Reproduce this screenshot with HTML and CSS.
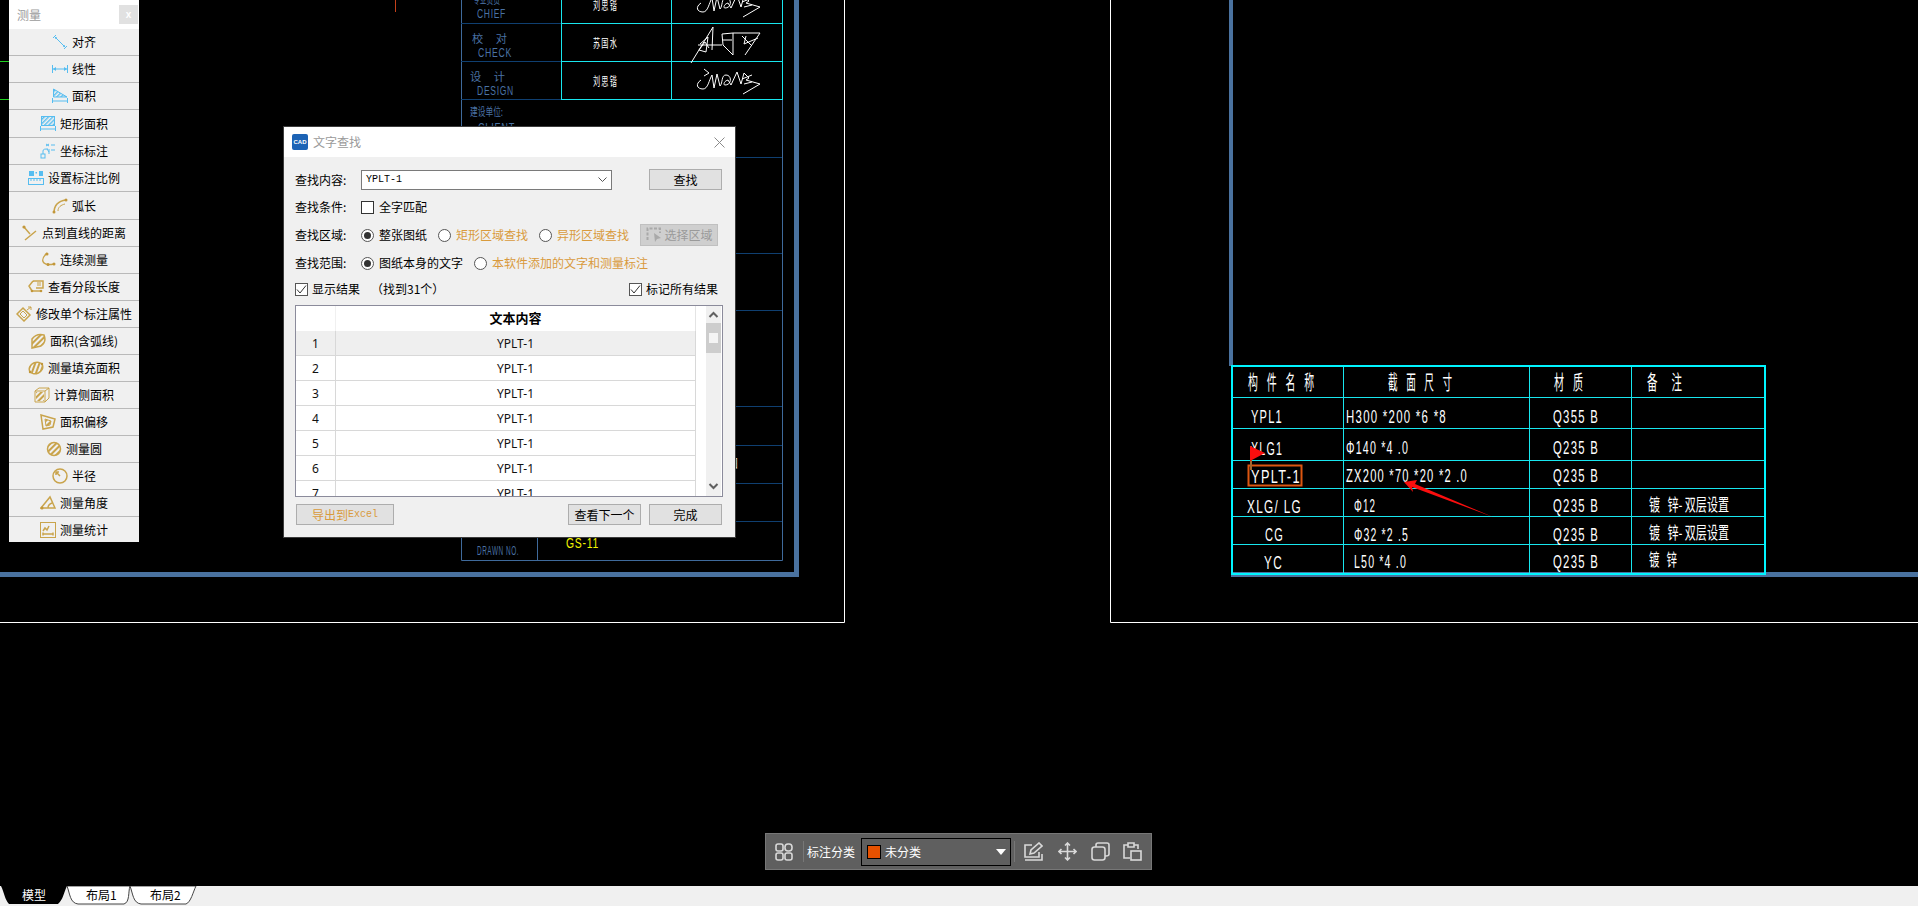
FILE: index.html
```html
<!DOCTYPE html>
<html lang="zh">
<head>
<meta charset="utf-8">
<title>文字查找</title>
<link rel="stylesheet" href="styles.css">
</head>
<body>
<div class="app">
  <main class="canvas">
    <svg class="drawing" width="1918" height="886" viewBox="0 0 1918 886">
      <defs>
        <pattern id="hb" width="3" height="3" patternUnits="userSpaceOnUse" patternTransform="rotate(-45)"><rect width="3" height="1.4" fill="#56bdf0"/></pattern>
        <pattern id="hg" width="4" height="4" patternUnits="userSpaceOnUse" patternTransform="rotate(-45)"><rect width="4" height="2" fill="#c9a44c"/></pattern>
      </defs>
      <!-- stray model lines -->
      <line class="l-green" x1="0" y1="61.5" x2="10" y2="61.5"/>
      <line class="l-green" x1="0" y1="99.5" x2="10" y2="99.5"/>
      <line class="l-red" x1="395.5" y1="0" x2="395.5" y2="12"/>

      <!-- left sheet -->
      <polyline class="l-white" points="844.5,0 844.5,622.5 0,622.5"/>
      <polyline class="l-frame" points="796.5,0 796.5,574.5 0,574.5"/>
      <polyline class="l-block" points="461.5,0 461.5,560.5 782.5,560.5 782.5,0"/>
      <line class="l-block" x1="537.5" y1="537" x2="537.5" y2="560"/>
      <line class="l-dim" x1="461" y1="23.5" x2="561" y2="23.5"/>
      <line class="l-dim" x1="461" y1="61.5" x2="561" y2="61.5"/>
      <line class="l-dim" x1="461" y1="99.5" x2="561" y2="99.5"/>
      <line class="l-dim" x1="461" y1="157.5" x2="782" y2="157.5"/>
      <line class="l-dim" x1="461" y1="253.5" x2="782" y2="253.5"/>
      <line class="l-dim" x1="461" y1="310.5" x2="782" y2="310.5"/>
      <line class="l-dim" x1="461" y1="406.5" x2="782" y2="406.5"/>
      <line class="l-dim" x1="461" y1="445.5" x2="782" y2="445.5"/>
      <line class="l-dim" x1="461" y1="483.5" x2="782" y2="483.5"/>
      <line class="l-dim" x1="461" y1="521.5" x2="782" y2="521.5"/>
      <g class="l-cyan">
        <line x1="561.5" y1="0" x2="561.5" y2="99"/>
        <line x1="671.5" y1="0" x2="671.5" y2="99"/>
        <line x1="782.5" y1="0" x2="782.5" y2="99"/>
        <line x1="561" y1="23.5" x2="783" y2="23.5"/>
        <line x1="561" y1="61.5" x2="783" y2="61.5"/>
        <line x1="561" y1="99.5" x2="783" y2="99.5"/>
      </g>
      <text class="t-blue" x="473" y="4" textLength="27" lengthAdjust="spacingAndGlyphs">专业负责</text>
      <text class="t-blue-en" x="477" y="18" textLength="29" lengthAdjust="spacingAndGlyphs">CHIEF</text>
      <text class="t-blue" x="472" y="43" textLength="35" lengthAdjust="spacingAndGlyphs">校     对</text>
      <text class="t-blue-en" x="478" y="57" textLength="34" lengthAdjust="spacingAndGlyphs">CHECK</text>
      <text class="t-blue" x="470" y="81" textLength="35" lengthAdjust="spacingAndGlyphs">设     计</text>
      <text class="t-blue-en" x="477" y="95" textLength="37" lengthAdjust="spacingAndGlyphs">DESIGN</text>
      <text class="t-blue" x="470" y="116" textLength="33" lengthAdjust="spacingAndGlyphs">建设单位:</text>
      <text class="t-blue-en" x="478" y="132" textLength="37" lengthAdjust="spacingAndGlyphs">CLIENT</text>
      <text class="t-blue-en" x="477" y="555" textLength="42" lengthAdjust="spacingAndGlyphs">DRAWN NO.</text>
      <text class="t-yellow" x="566" y="548" textLength="33" lengthAdjust="spacingAndGlyphs">GS-11</text>
      <text class="t-name" x="593" y="10" textLength="25" lengthAdjust="spacingAndGlyphs">刘思锴</text>
      <text class="t-name" x="593" y="48" textLength="25" lengthAdjust="spacingAndGlyphs">苏国水</text>
      <text class="t-name" x="593" y="86" textLength="25" lengthAdjust="spacingAndGlyphs">刘思锴</text>
      <text class="t-grey" x="726" y="468">图</text>
      <path class="l-sign" d="M704 -8L709 -4L704 -1M701 3C695 7 697 12 703 12C708 12 709 3 712 -2L714 11L717 -3L720 9C723 6 721 -2 726 -2C732 -2 732 8 725 8C723 8 724 4 728 3L731 8L737 -5L741 7L744 -4L749 1L746 3L753 5L760 7L743 17M742 2L752 -2M744 7L752 5"/>
      <path class="l-sign" d="M691 63L713 27L712 50M700 44L708 37L706 52L699 50L705 42L709 48M698 45L722 45M722 34L733 33L733 55L723 45L722 34M723 40H732M733 33L760 33L745 55M742 36L752 46M746 36L744 44L758 38"/>
      <path class="l-sign" d="M704 69L709 73L704 76M701 80C695 84 697 89 703 89C708 89 709 80 712 75L714 88L717 74L720 86C723 83 721 75 726 75C732 75 732 85 725 85C723 85 724 81 728 80L731 85L737 72L741 84L744 73L749 78L746 80L753 82L760 84L743 94M742 79L752 75M744 84L752 82"/>

      <!-- right sheet -->
      <polyline class="l-white" points="1110.5,0 1110.5,622.5 1918,622.5"/>
      <line class="l-frame-thin" x1="1231" y1="0" x2="1231" y2="366"/>
      <line class="l-frame" x1="1231" y1="574.5" x2="1918" y2="574.5"/>
      <g class="l-cyan">
        <line x1="1343.5" y1="366" x2="1343.5" y2="574"/>
        <line x1="1529.5" y1="366" x2="1529.5" y2="574"/>
        <line x1="1631.5" y1="366" x2="1631.5" y2="574"/>
        <line x1="1232" y1="397.5" x2="1765" y2="397.5"/>
        <line x1="1232" y1="428.5" x2="1765" y2="428.5"/>
        <line x1="1232" y1="460.5" x2="1765" y2="460.5"/>
        <line x1="1232" y1="488.5" x2="1765" y2="488.5"/>
        <line x1="1232" y1="516.5" x2="1765" y2="516.5"/>
        <line x1="1232" y1="544.5" x2="1765" y2="544.5"/>
      </g>
      <rect class="l-cyan-bold" x="1232" y="366" width="533" height="208"/>
      <text class="t-cad-h" x="1248" y="390" textLength="66" lengthAdjust="spacingAndGlyphs">构    件    名    称</text>
      <text class="t-cad-h" x="1388" y="390" textLength="64" lengthAdjust="spacingAndGlyphs">截    面    尺    寸</text>
      <text class="t-cad-h" x="1554" y="390" textLength="29" lengthAdjust="spacingAndGlyphs">材    质</text>
      <text class="t-cad-h" x="1647" y="390" textLength="35" lengthAdjust="spacingAndGlyphs">备      注</text>
      <text class="t-cad" x="1251" y="423" textLength="32" lengthAdjust="spacingAndGlyphs">YPL1</text>
      <text class="t-cad" x="1346" y="423" textLength="101" lengthAdjust="spacingAndGlyphs">H300 *200 *6 *8</text>
      <text class="t-cad" x="1553" y="423" textLength="46" lengthAdjust="spacingAndGlyphs">Q355 B</text>
      <text class="t-cad" x="1251" y="455" textLength="32" lengthAdjust="spacingAndGlyphs">XLG1</text>
      <text class="t-cad" x="1346" y="454" textLength="63" lengthAdjust="spacingAndGlyphs">Φ140 *4 .0</text>
      <text class="t-cad" x="1553" y="454" textLength="46" lengthAdjust="spacingAndGlyphs">Q235 B</text>
      <text class="t-cad" x="1251" y="483" textLength="50" lengthAdjust="spacingAndGlyphs">YPLT-1</text>
      <text class="t-cad" x="1346" y="482" textLength="122" lengthAdjust="spacingAndGlyphs">ZX200 *70 *20 *2 .0</text>
      <text class="t-cad" x="1553" y="482" textLength="46" lengthAdjust="spacingAndGlyphs">Q235 B</text>
      <text class="t-cad" x="1247" y="513" textLength="55" lengthAdjust="spacingAndGlyphs">XLG/ LG</text>
      <text class="t-cad" x="1354" y="512" textLength="22" lengthAdjust="spacingAndGlyphs">Φ12</text>
      <text class="t-cad" x="1553" y="512" textLength="46" lengthAdjust="spacingAndGlyphs">Q235 B</text>
      <text class="t-cad" x="1265" y="541" textLength="19" lengthAdjust="spacingAndGlyphs">CG</text>
      <text class="t-cad" x="1354" y="541" textLength="55" lengthAdjust="spacingAndGlyphs">Φ32 *2 .5</text>
      <text class="t-cad" x="1553" y="541" textLength="46" lengthAdjust="spacingAndGlyphs">Q235 B</text>
      <text class="t-cad" x="1264" y="569" textLength="19" lengthAdjust="spacingAndGlyphs">YC</text>
      <text class="t-cad" x="1354" y="568" textLength="53" lengthAdjust="spacingAndGlyphs">L50 *4 .0</text>
      <text class="t-cad" x="1553" y="568" textLength="46" lengthAdjust="spacingAndGlyphs">Q235 B</text>
      <text class="t-cad-r" x="1649" y="511" textLength="80" lengthAdjust="spacingAndGlyphs">镀   锌- 双层设置</text>
      <text class="t-cad-r" x="1649" y="539" textLength="80" lengthAdjust="spacingAndGlyphs">镀   锌- 双层设置</text>
      <text class="t-cad-r" x="1649" y="566" textLength="28" lengthAdjust="spacingAndGlyphs">镀   锌</text>
      <rect class="l-mark" x="1248.5" y="465.5" width="53" height="20"/>
      <line class="l-pole" x1="1251" y1="446" x2="1251" y2="470"/>
      <polygon class="f-red" points="1250,446 1265,453 1250,461"/>
      <polygon class="f-red" points="1404,482 1417,480 1415,484 1493,517 1412,487 1413,492"/>
    </svg>

    <!-- measure palette -->
    <aside class="palette">
      <header class="palette-head"><span class="palette-title">测量</span><span class="palette-close">x</span></header>
      <div class="tool"><svg class="ico" viewBox="0 0 16 16"><path class="ib" d="M4 1L1 4M15 12L12 15M3 3L13 13"/><circle class="dot-b" cx="4" cy="4" r="1"/><circle class="dot-b" cx="12" cy="12" r="1"/></svg>对齐</div>
      <div class="tool"><svg class="ico" viewBox="0 0 16 16"><path class="ib" d="M.5 4V12M15.5 4V12M1 8H15"/><path class="dot-b" d="M1 8L4 6V10ZM15 8L12 6V10Z"/></svg>线性</div>
      <div class="tool"><svg class="ico" viewBox="0 0 16 16"><path class="ib" d="M1.5 1L15 9H1.500Z" fill="url(#hb)"/><path class="ib" d="M.5 10V15M15.500 10V15M1 13H15"/></svg>面积</div>
      <div class="tool tall"><svg class="ico" viewBox="0 0 16 16"><rect class="ib" x="1.500" y=".5" width="13" height="9" fill="url(#hb)"/><path class="ib" d="M.5 10V15M15.500 10V15M1 13H15"/></svg>矩形面积</div>
      <div class="tool"><svg class="ico" viewBox="0 0 16 16"><rect class="ib" x="1" y="11" width="4" height="4"/><path class="ib" d="M3 11V8C3 6 5 6 8 6M6 3L9 1M6 1L9 3M11 2H15M7 6L9 9M9 6V11M11 7H15"/></svg>坐标标注</div>
      <div class="tool"><svg class="ico" viewBox="0 0 16 16"><rect class="dot-b" x="1" y="1" width="5" height="5"/><rect class="dot-b" x="11" y="1" width="4" height="5"/><rect class="dot-b" x="7.500" y="2" width="1.500" height="1.500"/><rect class="ib" x=".5" y="8.500" width="15" height="6"/><path class="ib" d="M3 9V11M6 9V11M9 9V11M12 9V11"/></svg>设置标注比例</div>
      <div class="tool tall"><svg class="ico" viewBox="0 0 16 16"><path class="ig-b" d="M2 15C2 7 6 3 14 2"/><path class="ig" d="M6 13C6 9 9 7 13 6"/><circle class="dot-g" cx="2" cy="14" r="1.500"/><circle class="dot-g" cx="14" cy="2" r="1.500"/></svg>弧长</div>
      <div class="tool"><svg class="ico" viewBox="0 0 16 16"><path class="ig-b" d="M3 15L14 6M2 2L8 9"/><circle class="dot-g" cx="2" cy="2" r="1.600"/></svg>点到直线的距离</div>
      <div class="tool"><svg class="ico" viewBox="0 0 16 16"><path class="ig-b" d="M7 1C3 5 1 8 4 11C6 13 9 13 14 12"/><circle class="dot-g" cx="7" cy="2" r="1.500"/><circle class="dot-g" cx="8" cy="12.500" r="1.500"/><circle class="dot-g" cx="14" cy="12" r="1.500"/></svg>连续测量</div>
      <div class="tool"><svg class="ico" viewBox="0 0 16 16"><path class="ig-b" d="M5 2L1 7L4 12H13M5 2H15V9H8"/><path class="ig" d="M9 4H13M9 6H13"/><circle class="dot-g" cx="4" cy="12" r="1.300"/><circle class="dot-g" cx="13" cy="12" r="1.300"/></svg>查看分段长度</div>
      <div class="tool"><svg class="ico" viewBox="0 0 16 16"><path class="ig-b" d="M1 8L7 2L14 9L8 15Z"/><path class="ig" d="M4 8L7 5L11 9L8 12ZM11 4L15 1M12 1H15V4"/></svg>修改单个标注属性</div>
      <div class="tool"><svg class="ico" viewBox="0 0 16 16"><path class="ig-b" fill="url(#hg)" d="M2 15L2 6C5 2 10 1 14 2C16 7 14 11 11 13Z"/></svg>面积(含弧线)</div>
      <div class="tool"><svg class="ico" viewBox="0 0 16 16"><ellipse class="ig-b" fill="url(#hg)" cx="8" cy="8" rx="7" ry="5.500" transform="rotate(-25 8 8)"/><circle class="dot-g" cx="2" cy="12" r="1.200"/><circle class="dot-g" cx="14" cy="4" r="1.200"/></svg>测量填充面积</div>
      <div class="tool"><svg class="ico" viewBox="0 0 16 16"><rect x="2" y="5" width="8" height="9" fill="url(#hg)"/><path class="ig" d="M1 4H11V15H1ZM1 4L5 1H15V11L11 15M11 4L15 1"/></svg>计算侧面积</div>
      <div class="tool"><svg class="ico" viewBox="0 0 16 16"><path class="ig-b" d="M1 1L15 5L13 13L3 15Z"/><path class="ig" fill="url(#hg)" d="M5 5L11 7L10 11L6 12Z"/></svg>面积偏移</div>
      <div class="tool"><svg class="ico" viewBox="0 0 16 16"><circle class="ig-b" fill="url(#hg)" cx="8" cy="8" r="6.500"/></svg>测量圆</div>
      <div class="tool"><svg class="ico" viewBox="0 0 16 16"><circle class="ig-b" cx="8" cy="8" r="7"/><path class="ig-b" d="M8 8L4 4M4 7V4H7"/></svg>半径</div>
      <div class="tool"><svg class="ico" viewBox="0 0 16 16"><path class="ig-b" d="M1 13H15L10 2ZM8 13C8 11 9 9 12 8"/><circle class="dot-g" cx="2" cy="13" r="1.500"/></svg>测量角度</div>
      <div class="tool tool-last"><svg class="ico" viewBox="0 0 16 16"><rect class="ig" x=".5" y=".5" width="15" height="15"/><path class="ig-b" d="M3 9L5 6L7 8L9 4M3 12H13M3 10.500V13.500M13 10.500V13.500"/></svg>测量统计</div>
    </aside>

    <!-- find dialog -->
    <section class="dialog">
      <header class="dlg-title">
        <span class="dlg-logo">CAD</span>
        <span class="dlg-name">文字查找</span>
        <svg class="dlg-x" width="11" height="11" viewBox="0 0 11 11"><path d="M.5 .5L10.500 10.500M10.500 .5L.5 10.500"/></svg>
      </header>
      <div class="dlg-body">
        <div class="row row-first">
          <span class="lbl">查找内容:</span>
          <span class="combo"><span class="combo-val">YPLT-1</span><svg width="9" height="5" viewBox="0 0 9 5"><path class="chev" d="M.5 .5L4.500 4.500L8.500 .5"/></svg></span>
          <button class="btn btn-find">查找</button>
        </div>
        <div class="row">
          <span class="lbl">查找条件:</span>
          <span class="box"></span><span class="opt">全字匹配</span>
        </div>
        <div class="row">
          <span class="lbl">查找区域:</span>
          <span class="radio on"></span><span class="opt">整张图纸</span>
          <span class="radio"></span><span class="opt orange">矩形区域查找</span>
          <span class="radio"></span><span class="opt orange">异形区域查找</span>
          <button class="btn btn-area"><svg width="16" height="16" viewBox="0 0 16 16"><path class="area-ic" d="M1.500 13V1.500H14V6"/><path d="M8 6L15 11L11 12L9 15Z" fill="#a9a9a9"/></svg>选择区域</button>
        </div>
        <div class="row">
          <span class="lbl">查找范围:</span>
          <span class="radio on"></span><span class="opt">图纸本身的文字</span>
          <span class="radio"></span><span class="opt orange">本软件添加的文字和测量标注</span>
        </div>
        <div class="row row-last">
          <span class="box checked"><svg width="11" height="11" viewBox="0 0 11 11"><path class="tick" d="M1 5.500L4 9L10 1.500"/></svg></span><span class="opt">显示结果</span>
          <span class="found">（找到31个）</span>
          <span class="box checked box-right"><svg width="11" height="11" viewBox="0 0 11 11"><path class="tick" d="M1 5.500L4 9L10 1.500"/></svg></span><span class="opt">标记所有结果</span>
        </div>
        <div class="results">
          <div class="grid">
            <div class="gh"></div><div class="gh gh-text">文本内容</div>
            <div class="gi sel">1</div><div class="gt sel">YPLT-1</div>
            <div class="gi">2</div><div class="gt">YPLT-1</div>
            <div class="gi">3</div><div class="gt">YPLT-1</div>
            <div class="gi">4</div><div class="gt">YPLT-1</div>
            <div class="gi">5</div><div class="gt">YPLT-1</div>
            <div class="gi">6</div><div class="gt">YPLT-1</div>
            <div class="gi">7</div><div class="gt">YPLT-1</div>
          </div>
          <div class="scroll">
            <svg class="sc-btn" width="15" height="17" viewBox="0 0 15 17"><path class="sc-arrow" d="M3.500 11L7.500 7L11.500 11"/></svg>
            <div class="thumb"><span class="thumb-grip"></span></div>
            <svg class="sc-btn sc-down" width="15" height="17" viewBox="0 0 15 17"><path class="sc-arrow" d="M3.500 6L7.500 10L11.500 6"/></svg>
          </div>
        </div>
        <div class="actions">
          <button class="btn btn-export">导出到<span class="mono">Excel</span></button>
          <button class="btn btn-next">查看下一个</button>
          <button class="btn btn-done">完成</button>
        </div>
      </div>
    </section>

    <!-- floating annotation toolbar -->
    <div class="floatbar">
      <svg class="fb-grid" width="18" height="18" viewBox="0 0 18 18"><rect class="fb-ic" x="1" y="1" width="7" height="7" rx="2"/><rect class="fb-ic" x="10" y="1" width="7" height="7" rx="3"/><rect class="fb-ic" x="1" y="10" width="7" height="7" rx="2"/><rect class="fb-ic" x="10" y="10" width="7" height="7" rx="2"/></svg>
      <span class="fb-sep"></span>
      <span class="fb-label">标注分类</span>
      <span class="fb-select"><span class="swatch"></span><span class="fb-val">未分类</span><span class="fb-caret"></span></span>
      <span class="fb-sep"></span>
      <svg class="fb-icon first" width="19" height="19" viewBox="0 0 19 19"><path class="fb-ic" d="M8 3H1V15H15V10M1 18H18V12M6 12L7 8L15 1L18 4L10 11Z"/></svg>
      <svg class="fb-icon" width="19" height="19" viewBox="0 0 19 19"><path class="fb-ic" d="M9.500 1V18M1 9.500H18M7 3.500L9.500 1L12 3.500M7 15.500L9.500 18L12 15.500M3.500 7L1 9.500L3.500 12M15.500 7L18 9.500L15.500 12"/></svg>
      <svg class="fb-icon" width="19" height="19" viewBox="0 0 19 19"><rect class="fb-ic" x="1" y="5" width="13" height="13" rx="2.500"/><path class="fb-ic" d="M5 5V3C5 2 6 1 7 1H16C17 1 18 2 18 3V12C18 13 17 14 15 14H14"/></svg>
      <svg class="fb-icon" width="19" height="19" viewBox="0 0 19 19"><path class="fb-ic" d="M7 16H1V3H5V1H11V3H15V7M5 3V5H11V3"/><rect class="fb-ic" x="8" y="9" width="10" height="9"/></svg>
    </div>
  </main>

  <footer class="tabbar">
    <svg width="240" height="20" viewBox="0 0 240 20">
      <path class="tab-black" d="M1 0H67C64 6 63 14 58 18H9C5 14 4 6 1 0Z"/>
      <path class="tab-white" d="M67 0C70 8 70 17 78 18H124C130 16 128 6 130 0Z"/>
      <path class="tab-white" d="M130 0C133 8 133 17 141 18H186C191 16 193 6 196 0Z"/>
      <text class="tab-t on" x="22" y="14">模型</text>
      <text class="tab-t" x="86" y="14">布局1</text>
      <text class="tab-t" x="150" y="14">布局2</text>
    </svg>
  </footer>
</div>
</body>
</html>
```
FILE: styles.css
```css
* { box-sizing: border-box; }
html, body { margin: 0; height: 100%; background: #000; overflow: hidden; }
body { font: 12px/1 "Noto Sans CJK SC", "Liberation Sans", sans-serif; color: #000; }

.app { display: flex; flex-direction: column; height: 906px; }
.canvas { position: relative; flex: 1; background: #000; overflow: hidden; }
.drawing { position: absolute; left: 0; top: 0; display: block; }

/* CAD strokes */
.drawing > line, .drawing > polyline, .drawing > path, .drawing > rect { fill: none; }
.l-white { stroke: #fff; stroke-width: 1; }
.l-frame { stroke: #4a729f; stroke-width: 5; }
.l-frame-thin { stroke: #4a729f; stroke-width: 4; }
.l-block { stroke: #3f6a9b; stroke-width: 1; }
.l-dim { stroke: #0f3f70; stroke-width: 1; }
.l-cyan line, .l-cyan { stroke: #18e6ee; stroke-width: 1; }
.l-cyan-bold { stroke: #00f5ff; stroke-width: 2; }
.l-green { stroke: #1fd01f; }
.l-red { stroke: #c4401a; }
.l-sign { stroke: #fff; stroke-width: 1; }
.l-mark { stroke: #dc5610; stroke-width: 2; }
.l-pole { stroke: #a0682e; stroke-width: 2; }
.f-red { fill: #fa0e0e; }

/* CAD text */
.drawing text { white-space: pre; }
.t-blue { fill: #4a72a4; font: 11px "Noto Sans CJK SC", sans-serif; }
.t-blue-en { fill: #4a72a4; font: 12px "Liberation Sans", sans-serif; letter-spacing: 1px; }
.t-yellow { fill: #f3f300; font: 14px "Liberation Sans", sans-serif; letter-spacing: 1px; }
.t-name { fill: #fff; font: 12px "Noto Sans CJK SC", sans-serif; letter-spacing: 2px; }
.t-grey { fill: #ddd; font: 12px "Noto Sans CJK SC", sans-serif; }
.t-cad { fill: #fff; font: 18px "Liberation Sans", sans-serif; letter-spacing: 2px; }
.t-cad-h { fill: #fff; font: 20px "Noto Sans CJK SC", sans-serif; }
.t-cad-r { fill: #fff; font: 17px "Noto Sans CJK SC", sans-serif; }

/* Measure palette */
.palette { position: absolute; left: 9px; top: 0; width: 130px; background: #f0f0f0; }
.palette-head { height: 29px; background: #fff; display: flex; align-items: center; justify-content: space-between; padding: 0 1px 0 8px; }
.palette-title { color: #9b9b9b; font-size: 12px; }
.palette-close { width: 19px; height: 19px; background: #e1e1e1; color: #fff; font: bold 10px/19px "Liberation Sans", sans-serif; text-align: center; }
.tool { height: 27px; display: flex; align-items: center; justify-content: center; gap: 4px; border-bottom: 1px solid #b9b9b9; }
.tool.tall { height: 28px; }
.tool-last { height: 25px; border-bottom: 0; }
.ico { width: 16px; height: 16px; flex: none; fill: none; }
.ib { stroke: #56bdf0; stroke-width: 1; }
.dot-b { fill: #56bdf0; }
.ig { stroke: #c9a44c; stroke-width: 1; }
.ig-b { stroke: #c9a44c; stroke-width: 1.500; }
.dot-g { fill: #c2973a; }

/* Dialog */
.dialog { position: absolute; left: 284px; top: 127px; width: 451px; height: 410px; background: #f0f0f0; box-shadow: 0 0 0 1px #3c3c3c; }
.dlg-title { height: 30px; background: #fff; display: flex; align-items: center; padding: 0 10px 0 8px; }
.dlg-logo { width: 16px; height: 16px; border-radius: 2px; background: #1c63b5; color: #fff; font: bold 6px/16px "Liberation Sans", sans-serif; text-align: center; flex: none; }
.dlg-name { margin-left: 5px; color: #9a9a9a; }
.dlg-x { margin-left: auto; }
.dlg-x path { stroke: #8a8a8a; fill: none; }
.dlg-body { padding: 12px 13px 0 11px; display: flex; flex-direction: column; }
.row { height: 28px; display: flex; align-items: center; }
.row-first { height: 21px; margin-bottom: 3px; }
.row-last { height: 24px; margin-bottom: 4px; padding-right: 4px; }
.lbl { width: 66px; flex: none; }
.combo { width: 251px; height: 20px; border: 1px solid #7a7a7a; background: #fff; display: flex; align-items: center; justify-content: space-between; padding: 0 4px; }
.combo-val { font: 10px "Liberation Mono", monospace; }
.chev, .tick { fill: none; stroke: #555; stroke-width: 1; }
.tick { stroke: #333; }
.btn { font: inherit; color: #000; background: #e1e1e1; border: 1px solid #adadad; padding: 0; height: 21px; display: inline-flex; align-items: center; justify-content: center; }
.btn-find { width: 73px; margin-left: 37px; }
.btn-area { width: 78px; height: 22px; margin-left: 11px; background: #cfcfcf; border-color: #c0c0c0; color: #9a9a9a; gap: 3px; }
.area-ic { fill: none; stroke: #a9a9a9; stroke-width: 2; stroke-dasharray: 3 1.500; }
.box { width: 13px; height: 13px; border: 1px solid #333; background: #fff; flex: none; display: inline-flex; align-items: center; justify-content: center; }
.box svg { display: block; }
.box.checked { border-color: #555; }
.box-right { margin-left: auto; }
.radio { width: 13px; height: 13px; border: 1px solid #555; border-radius: 50%; background: #fff; flex: none; margin-left: 11px; position: relative; }
.lbl + .radio { margin-left: 0; }
.radio.on::after { content: ""; position: absolute; left: 2px; top: 2px; width: 7px; height: 7px; border-radius: 50%; background: #333; }
.opt { margin-left: 5px; flex: none; }
.box + .opt { margin-left: 4px; }
.lbl + .box + .opt { margin-left: 5px; }
.orange { color: #d99a3c; }
.found { margin-left: 11px; }

/* Results table */
.results { width: 428px; height: 192px; border: 1px solid #8b8b9b; background: #fff; display: flex; overflow: hidden; }
.grid { width: 400px; flex: none; display: grid; grid-template-columns: 40px 360px; grid-auto-rows: 25px; }
.gh, .gi, .gt { display: flex; align-items: center; justify-content: center; }
.gh { border-right: 1px solid #f0f0f0; }
.gh-text { font-weight: bold; font-size: 13px; border-right: 1px solid #e4e4e4; padding-bottom: 2px; }
.gi, .gt { font: 12px "Noto Sans", sans-serif; border-bottom: 1px solid #d8d8d8; border-right: 1px solid #d8d8d8; color: #111; }
.sel { background: #efefef; }
.scroll { width: 15px; margin-left: 10px; background: #f0f0f0; position: relative; display: flex; flex-direction: column; }
.sc-btn { display: block; flex: none; }
.sc-arrow { fill: none; stroke: #606060; stroke-width: 2; }
.thumb { height: 30px; background: #cdcdcd; display: flex; justify-content: center; padding-top: 10px; }
.thumb-grip { width: 9px; height: 10px; background: #f4f4f4; }
.sc-down { margin-top: auto; margin-bottom: 1px; }

.actions { display: flex; margin-top: 7px; padding-left: 1px; }
.btn-export { width: 98px; color: #d99a3c; }
.mono { font: 10px "Liberation Mono", monospace; }
.btn-next { width: 73px; margin-left: 174px; }
.btn-done { width: 73px; margin-left: 8px; }

/* Float bar */
.floatbar { position: absolute; left: 765px; top: 833px; width: 387px; height: 37px; background: #5f5f5f; border: 1px solid #777; display: flex; align-items: center; padding-left: 9px; color: #fff; }
.fb-grid { flex: none; }
.fb-sep { width: 1px; height: 21px; background: #777; flex: none; margin-left: 10px; }
.fb-label { margin-left: 3px; flex: none; width: 48px; }
.fb-select { width: 150px; height: 28px; border: 1px solid #000; margin-left: 6px; display: flex; align-items: center; padding-left: 5px; flex: none; }
.swatch { width: 14px; height: 14px; background: #e65100; border: 1px solid #000; flex: none; }
.fb-val { margin-left: 4px; }
.fb-caret { width: 0; height: 0; border-left: 5px solid transparent; border-right: 5px solid transparent; border-top: 6px solid #fff; margin-left: auto; margin-right: 4px; }
.fb-select + .fb-sep { margin-left: 3px; }
.fb-icon { flex: none; margin-left: 14px; }
.fb-icon.first { margin-left: 9px; }
.fb-icon.first + .fb-icon { margin-left: 15px; }
.fb-icon:last-child { margin-left: 13px; }
.fb-ic { fill: none; stroke: #d9d9d9; stroke-width: 1.600; }

/* Tabs */
.tabbar { height: 20px; background: #f0f0f0; flex: none; }
.tabbar svg { display: block; }
.tab-black { fill: #000; }
.tab-white { fill: #fff; stroke: #444; stroke-width: 1; }
.tab-t { font: 12px "Noto Sans CJK SC", sans-serif; fill: #000; }
.tab-t.on { fill: #fff; }
```
